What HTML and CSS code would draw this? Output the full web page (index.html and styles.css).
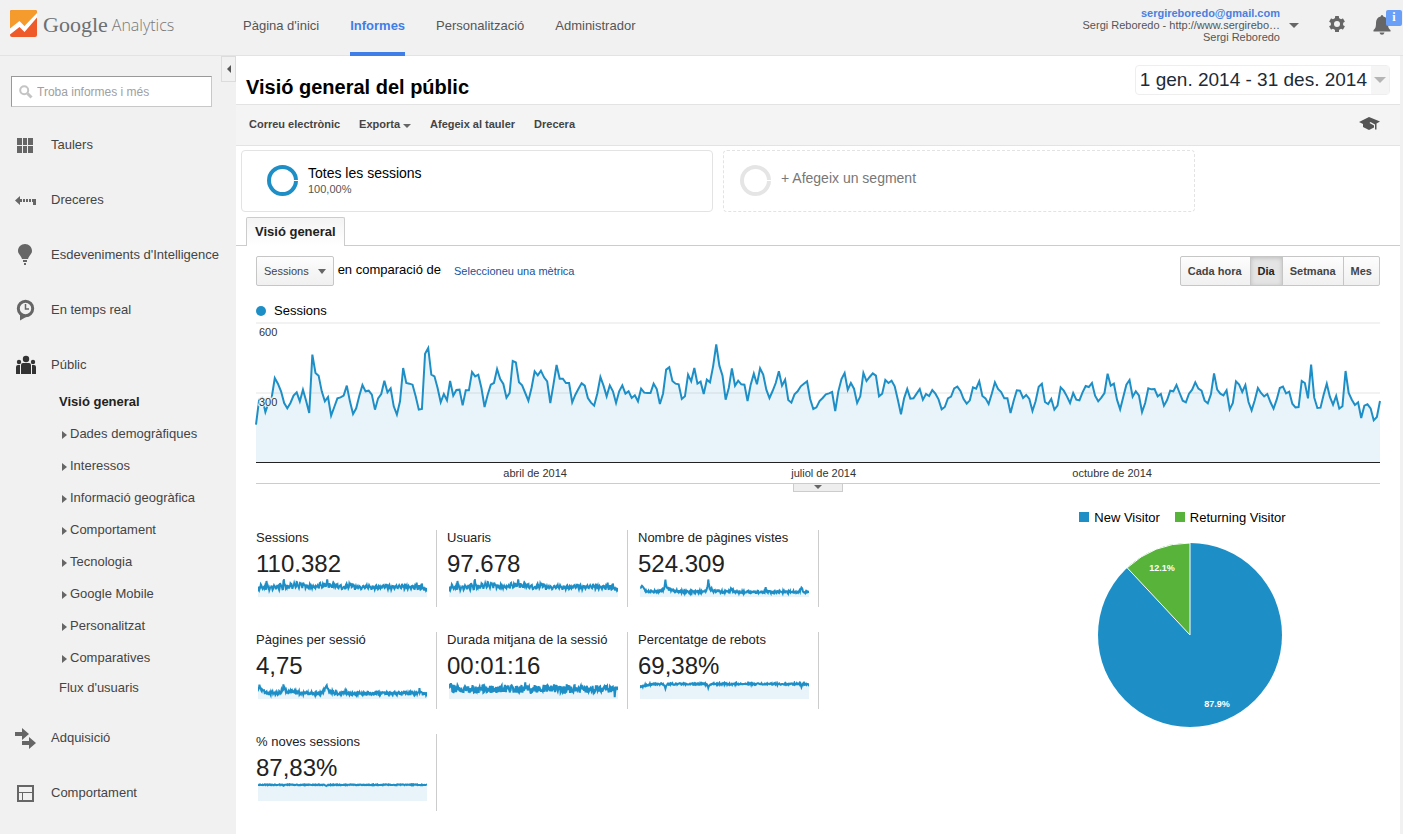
FILE: index.html
```html
<!DOCTYPE html>
<html lang="ca">
<head>
<meta charset="utf-8">
<title>Visió general del públic - Google Analytics</title>
<link rel="stylesheet" href="styles.css">
</head>
<body>
<header class="header">
  <a class="logo" href="#" aria-label="Google Analytics">
    <svg class="logo-mark" viewBox="0 0 27 27" aria-hidden="true">
      <rect width="27" height="27" rx="2" fill="#ee5a2a"/>
      <path d="M0 20V2Q0 0 2 0H25Q27 0 27 2V5L16 17L10 12Z" fill="#f59a2c"/>
      <path d="M0 18.500L9.500 11L14.500 16L27 3V7.500L14.500 22L9.500 17L0 24.500Z" fill="#fff"/>
    </svg>
    <span class="logo-google">Google</span>
    <span class="logo-analytics">Analytics</span>
  </a>
  <nav class="topnav">
    <a href="#">Pàgina d'inici</a>
    <a href="#" class="active">Informes</a>
    <a href="#">Personalització</a>
    <a href="#">Administrador</a>
  </nav>
  <div class="account">
    <button class="account-switch" type="button">
      <span class="account-text">
        <b>sergireboredo@gmail.com</b>
        <span>Sergi Reboredo - http://www.sergirebo…</span>
        <span>Sergi Reboredo</span>
      </span>
      <i class="caret"></i>
    </button>
    <button class="icon-button gear" type="button" aria-label="Configuració">
      <svg width="16" height="16" viewBox="0 0 16 16"><g fill="#666"><rect x="6" width="4" height="16" rx=".5"/><rect x="6" width="4" height="16" rx=".5" transform="rotate(60 8 8)"/><rect x="6" width="4" height="16" rx=".5" transform="rotate(120 8 8)"/><circle cx="8" cy="8" r="6.200"/></g><circle cx="8" cy="8" r="3" fill="#f1f1f1"/></svg>
    </button>
    <button class="icon-button bell" type="button" aria-label="Notificacions">
      <svg width="18" height="20" viewBox="0 0 18 20" fill="#666"><path d="M9 0Q10.300 0 10.300 1.600C13.500 2.300 15 5 15 8C15 12 15.500 13.500 17.500 15V16.500H.5V15C2.500 13.500 3 12 3 8C3 5 4.500 2.300 7.700 1.600Q7.700 0 9 0ZM6.500 17.500H11.500Q11 19.800 9 19.800Q7 19.800 6.500 17.500Z"/></svg>
      <span class="badge">i</span>
    </button>
  </div>
</header>

<div class="body">
  <aside class="sidebar">
    <button class="collapse" type="button" aria-label="Amaga el menú"><i></i></button>
    <label class="search">
      <svg width="14" height="14" viewBox="0 0 14 14" fill="none" stroke="#c4c4c4"><circle cx="5.200" cy="5.200" r="4" stroke-width="2"/><path d="M8.500 8.500L12.500 12.500" stroke-width="3"/></svg>
      <input type="text" placeholder="Troba informes i més" aria-label="Troba informes i més">
    </label>
    <nav class="menu">
      <a href="#"><svg viewBox="0 0 22 22" fill="#666"><path d="M3 4h5v7H3zM9 4h4v7H9zM14 4h5v7h-5zM3 12h5v7H3zM9 12h4v7H9zM14 12h5v7h-5z"/></svg>Taulers</a>
      <a href="#"><svg viewBox="0 0 22 22" fill="#666"><path d="M1 11.500L6 7V10H8V13H6V16ZM9 10h2v3H9zM12 10h2v3h-2zM15 10h2v3h-2zM18 10h4v6h-3v-3h-1z"/></svg>Dreceres</a>
      <a href="#"><svg viewBox="0 0 22 22" fill="#666"><path d="M11 0C15 0 18 3 18 7C18 10 15 11.500 14 15H8C7 11.500 4 10 4 7C4 3 7 0 11 0ZM9 16h4v2H9zM10 19h2v2h-2z"/></svg>Esdeveniments d'Intelligence</a>
      <a href="#"><svg viewBox="0 0 22 22"><circle cx="11.500" cy="9.500" r="7.200" fill="#f1f1f1" stroke="#666" stroke-width="3"/><path d="M6 15L12 18L6 21.500Z" fill="#666"/><path d="M11.500 5V10H15" fill="none" stroke="#666" stroke-width="1.500"/></svg>En temps real</a>
      <a href="#"><svg viewBox="0 0 22 22" fill="#333"><circle cx="12" cy="5" r="3.200"/><circle cx="5" cy="8" r="2.200"/><circle cx="19" cy="8" r="2.200"/><path d="M7 20V11Q7 9 9 9H15Q17 9 17 11V20ZM2 20V13Q2 11 4 11H6V20ZM18 20V11H20Q22 11 22 13V20Z"/></svg>Públic</a>
      <ul class="submenu">
        <li class="current"><a href="#">Visió general</a></li>
        <li class="group"><a href="#">Dades demogràfiques</a></li>
        <li class="group"><a href="#">Interessos</a></li>
        <li class="group"><a href="#">Informació geogràfica</a></li>
        <li class="group"><a href="#">Comportament</a></li>
        <li class="group"><a href="#">Tecnologia</a></li>
        <li class="group"><a href="#">Google Mobile</a></li>
        <li class="group"><a href="#">Personalitzat</a></li>
        <li class="group"><a href="#">Comparatives</a></li>
        <li class="single"><a href="#">Flux d'usuaris</a></li>
      </ul>
      <a href="#"><svg viewBox="0 0 22 22" fill="#666"><path d="M1 5H8V1L15 7L8 13V9H1ZM8 14H15V10L22 16L15 22V18H8Z"/></svg>Adquisició</a>
      <a href="#"><svg viewBox="0 0 22 22" fill="none" stroke="#666"><rect x="4" y="4" width="15" height="15" stroke-width="2"/><path d="M4 10.500H19M8.500 10.500V19"/></svg>Comportament</a>
    </nav>
  </aside>

  <main class="main">
    <div class="title-row">
      <h1>Visió general del públic</h1>
      <button class="date-range" type="button"><span>1 gen. 2014 - 31 des. 2014</span><em><i class="caret"></i></em></button>
    </div>
    <div class="toolbar">
      <button type="button">Correu electrònic</button>
      <button type="button">Exporta<i class="caret"></i></button>
      <button type="button">Afegeix al tauler</button>
      <button type="button">Drecera</button>
      <button type="button" class="education" aria-label="Formació">
        <svg width="21" height="14" viewBox="0 0 21 14" fill="#555"><path d="M0 5L10 0L21 4.500L17.500 6.500V12.500H16V7.500L11.500 5L10.500 6L15 8.500V10.500L10 13L4 10V7Z"/></svg>
      </button>
    </div>
    <div class="segments">
      <button type="button" class="segment">
        <svg width="32" height="32" viewBox="0 0 32 32"><circle cx="15.500" cy="15.500" r="13.500" fill="none" stroke="#1e8fc6" stroke-width="4"/><path d="M27 15.500H32" stroke="#fff"/></svg>
        <span><b>Totes les sessions</b><small>100,00%</small></span>
      </button>
      <button type="button" class="segment empty">
        <svg width="32" height="32" viewBox="0 0 32 32"><circle cx="15.500" cy="15.500" r="13.500" fill="none" stroke="#e5e5e5" stroke-width="4"/><path d="M27 15.500H32" stroke="#fff"/></svg>
        <span><b>+ Afegeix un segment</b></span>
      </button>
    </div>
    <div class="tabs"><a href="#" class="tab">Visió general</a></div>

    <section class="report">
      <div class="controls">
        <button type="button" class="metric-select">Sessions<i class="caret"></i></button>
        <span class="versus">en comparació de</span>
        <a href="#">Seleccioneu una mètrica</a>
        <div class="periods">
          <button type="button">Cada hora</button><button type="button" class="on">Dia</button><button type="button">Setmana</button><button type="button">Mes</button>
        </div>
      </div>
      <div class="legend"><i class="dot"></i>Sessions</div>
      <div class="chart">
        <svg class="plot" id="timeline" preserveAspectRatio="none"></svg>
        <span class="tick tick-top">600</span>
        <span class="tick tick-mid">300</span>
      </div>
      <div class="axis"><span>abril de 2014</span><span>juliol de 2014</span><span>octubre de 2014</span></div>
      <div class="divider"><button type="button" aria-label="Mostra les anotacions"><i class="caret"></i></button></div>

      <div class="summary">
        <div class="metrics">
          <div class="metric"><h2>Sessions</h2><p>110.382</p><svg data-spark="sessions" preserveAspectRatio="none"></svg></div>
          <div class="metric"><h2>Usuaris</h2><p>97.678</p><svg data-spark="users" preserveAspectRatio="none"></svg></div>
          <div class="metric"><h2>Nombre de pàgines vistes</h2><p>524.309</p><svg data-spark="views" preserveAspectRatio="none"></svg></div>
          <div class="metric"><h2>Pàgines per sessió</h2><p>4,75</p><svg data-spark="depth" preserveAspectRatio="none"></svg></div>
          <div class="metric"><h2>Durada mitjana de la sessió</h2><p>00:01:16</p><svg data-spark="duration" preserveAspectRatio="none"></svg></div>
          <div class="metric"><h2>Percentatge de rebots</h2><p>69,38%</p><svg data-spark="bounce" preserveAspectRatio="none"></svg></div>
          <div class="metric"><h2>% noves sessions</h2><p>87,83%</p><svg data-spark="fresh" preserveAspectRatio="none"></svg></div>
        </div>
        <div class="visitors">
          <div class="pie-legend">
            <span><i class="swatch new"></i>New Visitor</span>
            <span><i class="swatch returning"></i>Returning Visitor</span>
          </div>
          <svg class="pie" width="184" height="184" viewBox="0 0 184 184">
            <circle cx="92" cy="92" r="92" fill="#1e8fc6"/>
            <path d="M92 92V0A92 92 0 0 0 29.200 24.800Z" fill="#57b339" stroke="#fff"/>
            <text x="64" y="28">12.1%</text>
            <text x="119" y="164">87.9%</text>
          </svg>
        </div>
      </div>
    </section>
  </main>
</div>
<script src="charts.js"></script>
</body>
</html>
```
FILE: styles.css
```css
* { box-sizing: border-box; }
body { margin: 0; background: #f1f1f1; color: #000; font: 13px/16px "Liberation Sans", Arial, sans-serif; }
a { color: inherit; text-decoration: none; }
button { margin: 0; padding: 0; border: 0; background: none; color: inherit; font: inherit; cursor: pointer; }
svg { display: block; flex: none; }
h1, h2, p, ul { margin: 0; padding: 0; font-weight: normal; list-style: none; }
i { display: inline-block; }
.caret { width: 0; height: 0; border: 4px solid transparent; border-top: 5px solid #666; border-bottom: 0; }

.header { display: flex; height: 56px; border-bottom: 1px solid #e3e3e3; }
.logo { display: flex; width: 243px; padding: 10px 0 0 10px; }
.logo-mark { width: 27px; height: 27px; }
.logo-google { margin-left: 6px; color: #6c7074; font: 22px/30px "Liberation Serif", serif; }
.logo-analytics { margin-left: 4px; color: #777; font: 300 16px/30px "Open Sans", sans-serif; }
.topnav { display: flex; gap: 31px; color: #555; line-height: 52px; }
.topnav a { height: 56px; }
.topnav .active { border-bottom: 4px solid #3f7ee8; color: #3f7ee8; font-weight: bold; }
.account { display: flex; align-items: flex-start; margin-left: auto; }
.account-switch { display: flex; align-items: center; gap: 9px; margin-top: 7px; color: #555; font-size: 11px; line-height: 12px; text-align: right; }
.account-text { display: flex; flex-direction: column; }
.account-text b { color: #4a80de; }
.account-switch .caret { border-width: 5px 5px 0; }
.icon-button { position: relative; display: flex; }
.gear { margin: 16px 29px 0 30px; }
.bell { margin: 15px 12px 0 0; }
.bell svg { margin-left: -1px; }
.badge { position: absolute; top: -5px; left: 12px; width: 16px; height: 16px; border-radius: 2px; background: #6a9ff8; color: #fff; font: bold 12px/15px "Liberation Serif", serif; text-align: center; }

.body { display: flex; min-height: calc(100vh - 56px); }
.sidebar { position: relative; flex: none; width: 236px; padding: 20px 0 0; color: #444; }
.collapse { position: absolute; top: 0; right: 0; display: flex; align-items: center; justify-content: center; width: 15px; height: 26px; border: 1px solid #dcdcdc; }
.collapse i { border: 4px solid transparent; border-right-color: #555; border-left: 0; }
.search { display: flex; align-items: center; gap: 4px; width: 201px; height: 31px; margin-left: 11px; padding-left: 7px; border: 1px solid #c8c8c8; border-top-color: #999; border-left-color: #999; background: #fff; }
.search input { flex: 1; min-width: 0; padding: 0; border: 0; outline: 0; background: none; font: 12px/16px "Liberation Sans", Arial, sans-serif; }
.search input::placeholder { color: #a0a0a0; }
.menu { padding-top: 10px; }
.menu > a { display: flex; align-items: center; gap: 15px; height: 55px; padding-left: 14px; white-space: nowrap; }
.menu > a svg { width: 22px; height: 22px; }
.submenu { margin-top: -6px; padding: 0 0 6px 59px; line-height: 32px; }
.submenu .current { color: #222; font-weight: bold; }
.submenu .single { margin-top: -2px; }
.group { padding-left: 3px; }
.group::before { content: ""; display: inline-block; margin-right: 3px; border: 4px solid transparent; border-left: 5px solid #666; border-right: 0; vertical-align: middle; }

.main { flex: 1; min-width: 0; border-right: 3px solid #f1f1f1; background: #fff; }
.title-row { display: flex; justify-content: space-between; align-items: center; height: 49px; padding: 0 10px; border-bottom: 1px solid #e3e3e3; }
h1 { padding-top: 13px; font-size: 20px; line-height: 22px; font-weight: bold; }
.date-range { display: flex; height: 30px; border: 1px solid #eee; border-radius: 4px; color: #1c2b38; font-size: 19px; line-height: 28px; }
.date-range span { padding: 0 4px; }
.date-range em { display: flex; align-items: center; width: 18px; padding-left: 3px; background: #f5f5f5; }
.date-range .caret { border-width: 6px 6px 0; border-top-color: #b5b5b5; }
.toolbar { display: flex; align-items: center; gap: 19px; height: 41px; padding: 0 20px 2px 13px; border-bottom: 1px solid #e3e3e3; background: #f4f4f4; color: #444; font-size: 11px; font-weight: bold; }
.toolbar .caret { margin-left: 3px; border-top-width: 4px; }
.education { margin-left: auto; }
.segments { display: flex; gap: 10px; padding: 4px 5px 0; }
.segment { display: flex; flex: 0 1 472px; height: 62px; padding: 14px 25px; border: 1px solid #e3e3e3; border-radius: 4px; font-size: 14px; text-align: left; }
.segment span { display: flex; flex-direction: column; padding-left: 9px; line-height: 17px; }
.segment b { font-weight: normal; }
.segment small { color: #555; font-size: 11px; line-height: 15px; }
.segment.empty { padding-left: 16px; border-style: dashed; color: #777; }
.segment.empty b { padding-top: 5px; }
.tabs { display: flex; margin-top: 5px; padding-left: 10px; border-bottom: 1px solid #ccc; }
.tab { height: 29px; margin-bottom: -1px; padding: 0 8px; border: 1px solid #ccc; border-bottom: 0; border-radius: 2px 2px 0 0; background: linear-gradient(#f4f4f4, #fff); color: #222; font-weight: bold; line-height: 28px; }

.report { padding: 10px 20px 0; }
.controls { display: flex; align-items: center; height: 30px; color: #444; }
.controls button { height: 30px; border: 1px solid #c6c6c6; background: linear-gradient(#fdfdfd, #f0f0f0); font-size: 11px; }
.controls .metric-select { padding: 0 7px; border-radius: 2px; }
.metric-select .caret { margin: 0 0 1px 9px; }
.versus { padding: 0 13px 2px 4px; color: #000; }
.controls a { color: #15539a; font-size: 11px; }
.periods { display: flex; margin-left: auto; }
.controls .periods button { margin-left: -1px; padding: 0 7px; font-weight: bold; }
.controls .periods button:first-child { padding: 0 8px 0 7px; border-radius: 2px 0 0 2px; }
.periods button:last-child { border-radius: 0 2px 2px 0; }
.controls .periods .on { background: #e4e4e4; box-shadow: inset 0 1px 4px #bbb; color: #222; }
.legend { display: flex; align-items: center; gap: 8px; margin-top: 17px; }
.dot { width: 10px; height: 10px; border-radius: 5px; background: #1e8fc6; }
.chart { position: relative; margin-top: 4px; border-bottom: 1px solid #222; }
.plot { width: 100%; height: 139px; overflow: visible; }
.tick { position: absolute; left: 3px; color: #333; font-size: 11px; line-height: 14px; }
.tick-top { top: 2px; }
.tick-mid { top: 72px; text-shadow: 0 0 1px #eef6fb, 1px 0 1px #eef6fb, -1px 0 1px #eef6fb, 0 1px 1px #eef6fb, 0 -1px 1px #eef6fb, 2px 0 1px #eef6fb, 0 -2px 1px #eef6fb, -2px 0 1px #eef6fb; }
.axis { display: grid; grid-template-columns: repeat(3, 1fr); height: 20px; padding: 0 11% 0 12%; color: #333; font-size: 11px; line-height: 20px; text-align: center; }
.divider { display: flex; justify-content: center; align-items: flex-start; height: 9px; border-top: 1px solid #ccc; }
.divider button { display: flex; justify-content: center; width: 50px; height: 8px; border: 1px solid #ccc; border-top: 0; background: #eee; }
.divider .caret { margin-top: 1px; border-width: 4px 4px 0; }

.summary { display: flex; justify-content: space-between; padding-top: 17px; }
.metrics { display: grid; grid-template-columns: repeat(3, 181px); gap: 25px 10px; padding-top: 21px; }
.metric { height: 77px; border-right: 1px solid #ccc; color: #222; }
.metric p { font-size: 24px; line-height: 36px; }
.metric h2 { font-size: 13px; line-height: 16px; }
.metric svg { width: 169px; height: 18px; margin: -3px 0 0 2px; }
.visitors { width: 380px; }
.pie-legend { display: flex; justify-content: center; gap: 15px; padding: 1px 15px 17px 0; }
.swatch { width: 10px; height: 10px; margin-right: 5px; }
.new { background: #1e8fc6; }
.returning { background: #57b339; }
.pie { margin: 0 auto; }
.pie text { fill: #fff; font: bold 9px "Liberation Sans", Arial, sans-serif; text-anchor: middle; }
```
FILE: charts.js
```js
// Daily sessions as distances below the chart's upper edge (10 = 600 sessions, 427 = none).
const daily = [
  315,240,235,277,250,235,175,192,215,250,266,250,228,218,245,210,243,280,105,160,
  168,215,245,232,288,262,236,233,228,198,245,283,266,228,196,215,213,225,270,236,
  223,183,218,206,260,285,245,145,190,192,195,230,270,268,102,85,165,170,205,248,
  223,242,184,228,211,210,257,212,212,157,170,165,205,262,225,195,190,148,178,193,
  234,220,124,128,188,197,220,243,205,155,167,153,173,185,250,195,136,177,177,190,
  190,248,225,207,191,198,235,249,258,222,172,198,230,197,215,250,215,197,222,215,
  235,227,245,207,219,220,220,192,208,253,222,150,143,184,192,194,238,230,165,185,
  145,192,186,223,180,188,140,74,138,168,240,205,146,198,183,194,195,244,195,162,
  194,146,165,210,235,214,190,155,198,180,241,249,224,215,200,192,185,238,268,263,
  244,235,224,221,217,274,215,178,160,210,190,207,250,230,160,184,172,161,168,230,
  222,181,190,183,200,240,284,236,208,237,236,222,208,240,223,229,211,222,239,269,
  262,236,231,206,201,214,238,252,242,203,207,185,229,236,253,222,188,208,217,236,
  236,280,243,212,213,235,226,238,274,245,201,192,247,253,238,270,258,203,213,230,
  250,220,240,242,218,199,202,190,228,245,234,220,162,198,192,240,269,232,195,181,
  231,215,227,277,250,206,209,208,230,223,258,241,213,215,196,220,243,248,222,210,
  188,207,213,243,251,224,161,210,222,227,212,269,250,185,195,217,196,247,272,242,
  205,220,230,223,247,267,240,205,201,221,216,252,263,262,184,190,236,135,234,265,
  264,225,192,232,255,229,267,260,154,220,240,256,248,295,258,254,266,302,292,244
];
const LAST = daily.length - 1;

function draw(svg, ys, bottom, top, gridlines) {
  const line = ys.map((y, x) => `${x} ${y.toFixed(1)}`).join("L");
  svg.setAttribute("viewBox", `0 ${top} ${LAST} ${bottom - top}`);
  svg.innerHTML =
    gridlines.map(y => `<path d="M0 ${y}H${LAST}" stroke="#e5e5e5" vector-effect="non-scaling-stroke"/>`).join("") +
    `<path d="M0 ${bottom}L${line}L${LAST} ${bottom}Z" fill="#1e8fc6" fill-opacity=".1"/>` +
    `<path d="M${line}" fill="none" stroke="#1e8fc6" stroke-width="2" vector-effect="non-scaling-stroke"/>`;
}

// Repeatable day-to-day variation for the small charts.
function noise(seed) {
  let s = seed;
  return () => (s = (s * 16807) % 2147483647) / 2147483647 - 0.5;
}

// Level, spread and local spikes [day, height, width], in an 18-unit tall box.
function series(seed, level, spread, spikes) {
  const next = noise(seed);
  return daily.map((_, i) => {
    const lift = spikes.reduce((sum, [day, h, w]) => sum + h * Math.exp(-Math.abs(i - day) / w), 0);
    return Math.max(0.5, Math.min(17, level + next() * spread - lift));
  });
}

const small = daily.map(y => 18 - (427 - y) * 17.5 / 353);
const sparks = {
  sessions: small,
  users: small,
  views: series(71, 13, 2.6, [[4, 7, 5], [54, 11, 2], [60, 3, 16], [145, 11, 2], [150, 2, 10], [195, 4, 3], [267, 4, 1], [343, 5, 2]]),
  depth: series(29, 12.5, 3.8, [[3, 8, 5], [54, 8, 3], [70, 2, 18], [145, 8, 3], [152, 2, 8], [187, 3, 2], [343, 4, 2]]),
  duration: series(47, 8, 8, [[3, 3, 3], [118, 3, 1], [162, 5, 1], [174, -6, 1], [220, 2, 5], [352, -5, 2]]),
  bounce: series(83, 3, 1.8, [[3, -3, 10], [54, -4, 2], [145, -3, 2], [343, -3, 1]]),
  fresh: series(19, 1.8, 0.8, [[55, -1, 2], [145, -1, 2]])
};

draw(document.getElementById("timeline"), daily, 427, 10, [10, 220]);
document.querySelectorAll("[data-spark]").forEach(svg => draw(svg, sparks[svg.dataset.spark], 18, 0, []));
```
